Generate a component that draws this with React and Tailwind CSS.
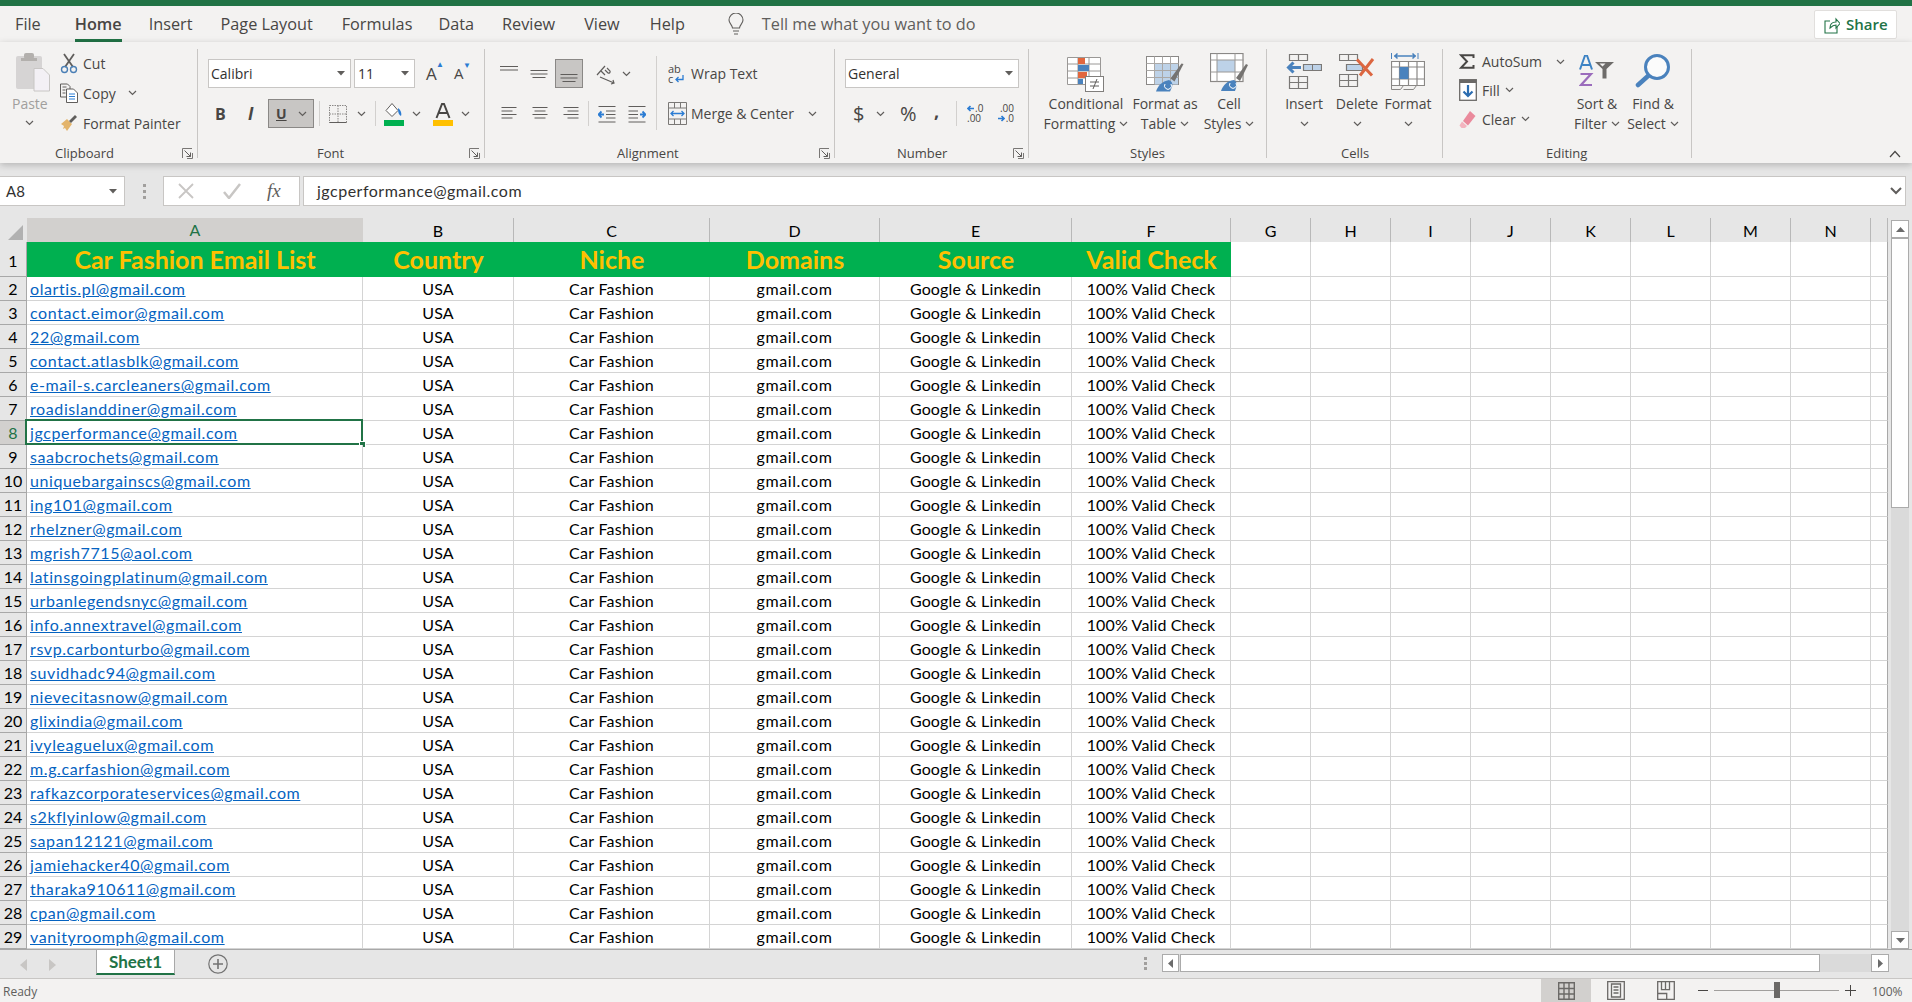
import React from 'react';

const emails = [
  'olartis.pl@gmail.com', 'contact.eimor@gmail.com', '22@gmail.com', 'contact.atlasblk@gmail.com',
  'e-mail-s.carcleaners@gmail.com', 'roadislanddiner@gmail.com', 'jgcperformance@gmail.com', 'saabcrochets@gmail.com',
  'uniquebargainscs@gmail.com', 'ing101@gmail.com', 'rhelzner@gmail.com', 'mgrish7715@aol.com',
  'latinsgoingplatinum@gmail.com', 'urbanlegendsnyc@gmail.com', 'info.annextravel@gmail.com', 'rsvp.carbonturbo@gmail.com',
  'suvidhadc94@gmail.com', 'nievecitasnow@gmail.com', 'glixindia@gmail.com', 'ivyleaguelux@gmail.com',
  'm.g.carfashion@gmail.com', 'rafkazcorporateservices@gmail.com', 's2kflyinlow@gmail.com', 'sapan12121@gmail.com',
  'jamiehacker40@gmail.com', 'tharaka910611@gmail.com', 'cpan@gmail.com', 'vanityroomph@gmail.com',
];

const gridCols = 'grid grid-cols-[27px_336px_151px_196px_170px_192px_159px_80px_80px_80px_80px_80px_80px_80px_80px_17px]';
const extraCols = ['G', 'H', 'I', 'J', 'K', 'L', 'M', 'N', ''];
const rowCells = [
  ['USA', 'tracking-[0.1px]'],
  ['Car Fashion', 'tracking-[0.3px]'],
  ['gmail.com', 'tracking-[0.6px]'],
  ['Google & Linkedin', 'tracking-[0.15px]'],
  ['100% Valid Check', 'tracking-[0.15px]'],
];

const Chev = ({ className = '' }) => (
  <svg width="9" height="6" viewBox="0 0 9 6" className={`inline-block shrink-0 ${className}`}>
    <path d="M1 1l3.500 3.500L8 1" fill="none" stroke="#605e5c" strokeWidth="1.200" />
  </svg>
);

const Caret = () => (
  <svg width="8" height="5" viewBox="0 0 8 5" className="shrink-0"><path d="M0 0h8L4 4.500z" fill="#605e5c" /></svg>
);

const Launcher = () => (
  <svg width="11" height="11" viewBox="0 0 11 11" className="shrink-0">
    <path d="M.5 10V.5H10M10.500 5v5.500H5" fill="none" stroke="#797775" />
    <path d="M2.500 2.500l6 6M8.500 4.500v4h-4" fill="none" stroke="#605e5c" />
  </svg>
);

const Group = ({ width, label, labelLeft, launcher, children }) => (
  <div className={`flex h-[109px] mt-[7px] shrink-0 flex-col border-r border-[#c8c6c4] ${width}`}>
    <div className="flex-1 min-h-0">{children}</div>
    <div className="flex h-[16px] -mb-[3px] items-center text-[13px] leading-none text-[#484644]">
      <span className={labelLeft}>{label}</span>
      {launcher && <span className="ml-auto mr-[4px] flex"><Launcher /></span>}
    </div>
  </div>
);

const BigButton = ({ width, iconTop, icon, lines }) => (
  <div className={`flex shrink-0 flex-col items-center text-[14px] leading-[20px] text-[#484644] ${width}`}>
    <div className={`flex h-[45px] items-start justify-center ${iconTop}`}>{icon}</div>
    {lines.map((l, i) => <div key={i} className="flex items-center gap-[4px] whitespace-nowrap">{l}{i === 1 && <Chev />}</div>)}
    {lines.length === 1 && <div className="flex h-[20px] items-center"><Chev /></div>}
  </div>
);

const AlignLines = ({ widths, y = 0 }) => (
  <svg width="20" height="18" viewBox="0 0 20 18">
    {widths.map((w, i) => <path key={i} d={`M${(20 - w[0]) / 2 + w[1]} ${y + i * 3.5 + .5}h${w[0]}`} stroke="#5f5d5b" strokeWidth="1" />)}
  </svg>
);

const PasteIcon = () => (
  <svg width="36" height="39" viewBox="0 0 36 39">
    <rect x="1" y="3" width="26" height="33" rx="2" fill="#d6d4d4" />
    <rect x="9" y="0" width="10" height="6" rx="2" fill="#b3b0ad" />
    <rect x="6" y="5" width="16" height="3" fill="#b3b0ad" />
    <path d="M19 15.500h9l6.500 6.500v16H19z" fill="#f3f0f5" stroke="#c8c6c4" />
  </svg>
);
const CutIcon = () => (
  <svg width="18" height="21" viewBox="0 0 18 21">
    <path d="M4 1l9 13M14 1L5 14" stroke="#605e5c" strokeWidth="1.800" fill="none" />
    <circle cx="4.500" cy="16.500" r="3" fill="none" stroke="#4a7fb5" strokeWidth="1.400" />
    <circle cx="13.500" cy="16.500" r="3" fill="none" stroke="#4a7fb5" strokeWidth="1.400" />
  </svg>
);
const CopyIcon = () => (
  <svg width="18" height="20" viewBox="0 0 18 20" fill="none">
    <path d="M.5 1h7l2.500 2.500V14H.5z" fill="#f3f2f1" stroke="#605e5c" />
    <path d="M6.500 6h7l4 4v9.500h-11z" fill="#fff" stroke="#605e5c" />
    <path d="M9 11h6M9 13.500h6M9 16h6" stroke="#2b7cd3" />
    <path d="M2.500 4h4M2.500 7h3M2.500 10h3" stroke="#605e5c" />
  </svg>
);
const PainterIcon = () => (
  <svg width="18" height="18" viewBox="0 0 18 18">
    <path d="M1 10l6-5 5 5-5 7-2-3-2 1 1-3z" fill="#e3b46b" />
    <path d="M9 7l6-6 2 2-6 6z" fill="#605e5c" />
  </svg>
);
const BorderIcon = () => (
  <svg width="18" height="18" viewBox="0 0 18 18" fill="none" stroke="#8a8886" strokeDasharray="1.500 1">
    <path d="M.5.500h17v17H.5zM9 .5v17M.5 9h17" />
    <path d="M.5 17.500h17" stroke="#605e5c" strokeDasharray="none" />
  </svg>
);
const FillIcon = () => (
  <svg width="20" height="24" viewBox="0 0 20 24">
    <path d="M8 1.500l6 7-6 6-6-6z" fill="#fff" stroke="#605e5c" />
    <path d="M14 6c3 2 4 6 3 8-2-1-3-3-3-8z" fill="#2b7cd3" />
    <rect x="0" y="18" width="20" height="6" fill="#00b050" />
  </svg>
);
const FontColorIcon = () => (
  <svg width="20" height="24" viewBox="0 0 20 24">
    <path d="M3.500 16L9 2h2l5.500 14M6 11h8" fill="none" stroke="#484644" strokeWidth="2" />
    <rect x="0" y="18" width="20" height="6" fill="#ffc000" />
  </svg>
);
const OrientIcon = () => (
  <svg width="20" height="22" viewBox="0 0 20 22" fill="none" stroke="#605e5c" strokeWidth="1.200">
    <path d="M1 12l8-9M5 8l4 4M11 5l3 3a1.500 1.500 0 0 1-2 2l-3-3M4 14l14 6M15 21l3-1-1-3" />
  </svg>
);
const IndentIcon = ({ flip }) => (
  <svg width="18" height="18" viewBox="0 0 18 18" fill="none" className={flip ? '-scale-x-100' : ''}>
    <path d="M.5 1.500h17M8 6h9.500M8 9.500h9.500M8 13h9.500M.5 17h17" stroke="#605e5c" />
    <path d="M6 9.500H1M3.500 6.500l-3 3 3 3" stroke="#2b7cd3" strokeWidth="1.800" />
  </svg>
);
const WrapIcon = () => (
  <div className="w-[18px] text-[11px] leading-[10px] text-[#484644]">
    <div>ab</div>
    <div className="flex items-center">c
      <svg width="10" height="8" viewBox="0 0 10 8" className="ml-px"><path d="M9 0v4.500H2M4.500 2L2 4.500 4.500 7" fill="none" stroke="#2b7cd3" strokeWidth="1.300" /></svg>
    </div>
  </div>
);
const MergeIcon = () => (
  <svg width="19" height="23" viewBox="0 0 19 23" fill="none">
    <path d="M.5.500h18v22H.5zM.5 6h18M.5 17h18M6.500.5V6M12.500.5V6M6.500 17v5.500M12.500 17v5.500" stroke="#7a7876" />
    <path d="M3 11.500h13M5.500 9l-2.500 2.500L5.500 14M13.500 9l2.500 2.500-2.500 2.500" stroke="#2b7cd3" strokeWidth="1.300" />
  </svg>
);
const DecArrow = ({ right }) => (
  <svg width="7" height="7" viewBox="0 0 7 7" className="mr-px">
    {right
      ? <path d="M0 3.500h5.500M3.500 1l2.500 2.500L3.500 6" fill="none" stroke="#2b7cd3" strokeWidth="1.600" />
      : <path d="M7 3.500H1.500M3.500 1L1 3.500 3.500 6" fill="none" stroke="#2b7cd3" strokeWidth="1.600" />}
  </svg>
);
const DecimalIcon = ({ dec }) => (
  <div className="w-[17px] text-[10px] leading-[9px] text-[#484644]">
    {dec
      ? <><div className="flex justify-end">.00</div><div className="mt-px flex items-center justify-end"><DecArrow right />.0</div></>
      : <><div className="flex items-center"><DecArrow />.0</div><div className="mt-px">.00</div></>}
  </div>
);
const CondIcon = () => (
  <svg width="38" height="35" viewBox="0 0 38 35">
    <path d="M.5.500h33v27H.5zM11 .5v27M22 .5v27M.5 7h33M.5 14h33M.5 21h33" fill="#fff" stroke="#9a9896" />
    <rect x="11" y="1" width="7" height="6" fill="#e2673e" />
    <rect x="11" y="8" width="11" height="6" fill="#4a82bd" />
    <rect x="11" y="15" width="9" height="6" fill="#e2673e" />
    <rect x="11" y="22" width="5" height="5" fill="#4a82bd" />
    <rect x="18.500" y="19.500" width="18" height="15" fill="#fff" stroke="#807e7c" />
    <path d="M23 25h9M23 29h9M30 22l-4 10" stroke="#605e5c" fill="none" />
  </svg>
);
const TableStyleIcon = () => (
  <svg width="38" height="36" viewBox="0 0 38 36">
    <rect x=".5" y=".5" width="32" height="28" fill="#fff" stroke="#8a8886" />
    <rect x="9" y="7.500" width="23" height="21" fill="#bdd2e8" />
    <path d="M8.500 .5v28M16.500 .5v28M24.500 .5v28M.5 7.500h32M.5 14.500h32M.5 21.500h32" stroke="#aaa8a6" fill="none" />
    <path d="M37.500 8l-2-.5-11 15 4 3z" fill="#757371" />
    <path d="M10 35.500c2-6 6-10 13-11.500 3 1.500 4 3.500 3 7l-2 4.500z" fill="#4a82bd" />
    <path d="M19 28a3.500 3.500 0 1 0 6 0" fill="none" stroke="#fff" />
  </svg>
);
const CellStyleIcon = () => (
  <svg width="38" height="38" viewBox="0 0 38 38">
    <rect x=".5" y=".5" width="32.500" height="28" fill="#fff" stroke="#8a8886" strokeWidth="1.200" />
    <rect x="7" y="7" width="18" height="12" fill="#bdd2e8" />
    <path d="M7 .5v28M25 .5v28M.5 7h33M.5 19h33" stroke="#9a9896" fill="none" />
    <path d="M38 12l-2-1-10 14 4 3z" fill="#757371" />
    <path d="M11 38c2-6 6-10 13-11 3 1.500 3 5 2 8l-1 3z" fill="#4a82bd" />
    <path d="M20 30a3.500 3.500 0 1 0 6 0" fill="none" stroke="#fff" />
  </svg>
);
const InsertIcon = () => (
  <svg width="36" height="35" viewBox="0 0 36 35" fill="none">
    <path d="M3.500.5h18v6h-18zM12.500 .5v6M3.500 22.500h18v12h-18zM12.500 22.500v12M3.500 28.500h18" stroke="#7a7876" strokeWidth="1.200" />
    <path d="M17.500 10.500h18v6h-18z" fill="#bdd2e8" stroke="#7a7876" strokeWidth="1.200" />
    <path d="M26.500 10.500v6" stroke="#7a7876" />
    <path d="M15 13.500H3M7.500 8.500l-5 5 5 5" stroke="#4a82bd" strokeWidth="3" />
  </svg>
);
const DeleteIcon = () => (
  <svg width="36" height="33" viewBox="0 0 36 33" fill="none">
    <path d="M.5.500h18v6H.5zM9.500 .5v6M.5 20.500h18v12H.5zM9.500 20.500v12M.5 26.500h18" stroke="#7a7876" strokeWidth="1.200" />
    <path d="M7.500 10.500h16v6h-16z" fill="#bdd2e8" stroke="#7a7876" strokeWidth="1.200" />
    <path d="M18 5.500l15 16M34 5L21 21.500" stroke="#dc6640" strokeWidth="3" />
  </svg>
);
const FormatIcon = () => (
  <svg width="34" height="37" viewBox="0 0 34 37" fill="none">
    <path d="M.5 0v6M27 0v6" stroke="#4a82bd" />
    <path d="M3 3h22M6.500 .5L4 3l2.500 2.500M21.500 .5L24 3l-2.500 2.500" stroke="#4a82bd" strokeWidth="1.500" />
    <path d="M.5 8.500h33v24H.5zM.5 14h33M.5 26h33M8.500 8.500v24M17.500 8.500v24M26 8.500v24" fill="#fff" stroke="#8a8886" strokeWidth="1.200" />
    <rect x="8.500" y="14" width="9" height="12" fill="#4a82bd" />
    <path d="M.5 32.500v4h9l3-4M12.500 36.500h10l3-4" stroke="#8a8886" />
  </svg>
);
const SigmaIcon = () => (
  <svg width="16" height="15" viewBox="0 0 16 15" fill="none">
    <path d="M14.500 4V1.200H2l6 6.300-6 6.300h12.500V11" stroke="#484644" strokeWidth="2" />
  </svg>
);
const FillDownIcon = () => (
  <svg width="18" height="22" viewBox="0 0 18 22">
    <rect x=".7" y=".7" width="16.600" height="20.600" fill="#fff" stroke="#6b6967" strokeWidth="1.300" />
    <rect x="1" y="1" width="16" height="3" fill="#6b6967" />
    <path d="M9 6v11M4.500 12.500L9 17l4.500-4.500" fill="none" stroke="#2b6cb0" strokeWidth="2.200" />
  </svg>
);
const EraserIcon = () => (
  <svg width="17" height="17" viewBox="0 0 17 17">
    <path d="M11 0l5.500 5-7.500 9.500-5-4.500z" fill="#ea8a9c" />
    <path d="M3 10.500l5 4.500-2 2H2.500L.5 14.500z" fill="#f3b4bf" />
  </svg>
);
const SortIcon = () => (
  <svg width="36" height="32" viewBox="0 0 36 32">
    <path d="M1 14.500L6 .5h2l5 14M3.500 10h7.500" fill="none" stroke="#3d83c4" strokeWidth="2" />
    <path d="M1.500 19h10.500L2 30h11" fill="none" stroke="#9b6cbc" strokeWidth="2.200" />
    <path d="M16 7h19l-7.500 7v9.500h-4V14z" fill="#6e6c6a" />
    <path d="M20.500 8.500h6l-3 3z" fill="#f3f2f1" />
  </svg>
);
const FindIcon = () => (
  <svg width="36" height="34" viewBox="0 0 36 34" fill="none">
    <circle cx="22" cy="13" r="11.500" stroke="#4a82bd" strokeWidth="3" fill="#fbfbfb" />
    <path d="M13 22L3 31" stroke="#4a82bd" strokeWidth="4.500" strokeLinecap="round" />
  </svg>
);
const BulbIcon = () => (
  <svg width="16" height="23" viewBox="0 0 16 23" fill="none" stroke="#605e5c" strokeWidth="1.100">
    <path d="M4.500 15c0-3-3.500-4.500-3.500-8a7 7 0 0 1 14 0c0 3.500-3.500 5-3.500 8z" />
    <path d="M5 18h6M6 21h4" />
  </svg>
);
const ShareIcon = () => (
  <svg width="16" height="19" viewBox="0 0 16 19" fill="none" stroke="#217346" strokeWidth="1.100">
    <path d="M6 6H1v12h12v-6" />
    <path d="M6 13c0-4 2-6 6-6V4l4 4.500-4 4.500v-3c-3 0-4 1-6 3z" />
  </svg>
);

const SmallRow = ({ icon, children }) => (
  <div className="flex h-[30px] items-center whitespace-nowrap">
    <span className="flex w-[23px] shrink-0">{icon}</span>
    {children}
  </div>
);

const Ribbon = () => (
  <div className="relative z-10 flex h-[121px] items-start bg-[#f3f2f1] shadow-[0_2px_7px_rgba(0,0,0,0.22)] font-['Open_Sans',sans-serif] text-[14px] text-[#484644]">
    <Group width="w-[198px]" label="Clipboard" labelLeft="ml-[55px]" launcher>
      <div className="flex pl-[12px]">
        <div className="flex w-[48px] shrink-0 flex-col pt-[4px] text-[#a19f9d]">
          <div className="flex h-[41px] pl-[3px]"><PasteIcon /></div>
          <div className="leading-[20px]">Paste</div>
          <div className="flex h-[18px] items-center pl-[13px]"><Chev /></div>
        </div>
        <div className="-mt-px flex flex-col">
          <SmallRow icon={<CutIcon />}>Cut</SmallRow>
          <SmallRow icon={<CopyIcon />}>Copy<Chev className="ml-[12px]" /></SmallRow>
          <SmallRow icon={<PainterIcon />}>Format Painter</SmallRow>
        </div>
      </div>
    </Group>

    <Group width="w-[287px]" label="Font" labelLeft="ml-[119px]" launcher>
      <div className="pl-[10px] pt-[10px]">
        <div className="flex h-[29px] items-center">
          <div className="flex h-full w-[143px] items-center justify-between border border-[#c8c6c4] bg-white pl-[2px] pr-[5px] text-[#323130]">Calibri<Caret /></div>
          <div className="ml-[3px] flex h-full w-[61px] items-center justify-between border border-[#c8c6c4] bg-white pl-[3px] pr-[5px] text-[#323130]">11<Caret /></div>
          <span className="relative ml-[11px] w-[28px] text-[17px]">A<span className="absolute left-[10px] top-[-3px] text-[8px] text-[#2b7cd3]">▲</span></span>
          <span className="relative w-[20px] text-[15px]">A<span className="absolute left-[9px] top-[-3px] text-[8px] text-[#2b7cd3]">▼</span></span>
        </div>
        <div className="mt-[11px] flex h-[29px] items-center">
          <span className="ml-[7px] w-[33px] text-[16px] font-bold">B</span>
          <span className="w-[20px] text-[17px] font-bold italic">I</span>
          <div className="flex h-full w-[46px] items-center border border-[#8a8886] bg-[#c8c6c4] pl-[7px]">
            <span className="font-bold underline">U</span><Chev className="ml-[11px]" />
          </div>
          <span className="ml-[5px] h-[25px] w-px bg-[#d2d0ce]" />
          <span className="ml-[9px] flex"><BorderIcon /></span>
          <Chev className="ml-[10px]" />
          <span className="ml-[9px] h-[25px] w-px bg-[#d2d0ce]" />
          <span className="ml-[8px] flex"><FillIcon /></span>
          <Chev className="ml-[8px]" />
          <span className="ml-[12px] flex"><FontColorIcon /></span>
          <Chev className="ml-[8px]" />
        </div>
      </div>
    </Group>

    <Group width="w-[350px]" label="Alignment" labelLeft="ml-[132px]" launcher>
      <div className="flex pl-[14px] pt-[10px]">
        <div className="w-[157px] shrink-0">
          <div className="flex h-[29px] items-center">
            <span className="flex w-[30px]"><AlignLines widths={[[18, 0], [18, 0]]} y={1} /></span>
            <span className="flex w-[26px]"><AlignLines widths={[[17, 0], [17, 0], [13, 0]]} y={5} /></span>
            <span className="flex h-full w-[28px] items-center justify-center border border-[#8a8886] bg-[#c8c6c4]"><AlignLines widths={[[17, 0], [17, 0], [13, 0]]} y={9} /></span>
            <span className="ml-[13px] flex"><OrientIcon /></span>
            <Chev className="ml-[6px]" />
          </div>
          <div className="mt-[11px] flex h-[29px] items-center">
            <span className="flex w-[31px] pl-[2px]"><AlignLines widths={[[15, -2], [11, -4], [15, -2], [11, -4]]} y={2} /></span>
            <span className="flex w-[31px]"><AlignLines widths={[[15, 0], [11, 0], [15, 0], [11, 0]]} y={2} /></span>
            <span className="flex w-[27px]"><AlignLines widths={[[15, 0], [11, 2], [15, 0], [11, 2]]} y={2} /></span>
            <span className="h-[25px] w-px bg-[#d2d0ce]" />
            <span className="ml-[9px] flex"><IndentIcon /></span>
            <span className="ml-[12px] flex"><IndentIcon flip /></span>
          </div>
        </div>
        <div className="-mt-[3px] h-[74px] w-px shrink-0 bg-[#d2d0ce]" />
        <div className="pl-[11px] whitespace-nowrap">
          <div className="flex h-[29px] items-center"><span className="flex w-[23px]"><WrapIcon /></span>Wrap Text</div>
          <div className="mt-[11px] flex h-[29px] items-center"><span className="flex w-[23px]"><MergeIcon /></span>Merge &amp; Center<Chev className="ml-[14px]" /></div>
        </div>
      </div>
    </Group>

    <Group width="w-[194px]" label="Number" labelLeft="ml-[62px]" launcher>
      <div className="pl-[10px] pt-[10px]">
        <div className="flex h-[29px] w-[174px] items-center justify-between border border-[#c8c6c4] bg-white pl-[2px] pr-[5px] text-[#323130]">General<Caret /></div>
        <div className="mt-[11px] flex h-[29px] items-center">
          <span className="ml-[8px] w-[22px] text-[20px]">$</span>
          <Chev className="ml-px" />
          <span className="ml-[15px] w-[30px] text-[20px] leading-none">%</span>
          <span className="ml-[4px] w-[22px] -translate-y-[3px] text-[18px] font-bold leading-none">,</span>
          <span className="h-[25px] w-px bg-[#d2d0ce]" />
          <span className="ml-[10px] flex"><DecimalIcon /></span>
          <span className="ml-[13px] flex"><DecimalIcon dec /></span>
        </div>
      </div>
    </Group>

    <Group width="w-[238px]" label="Styles" labelLeft="ml-[101px]">
      <div className="flex pl-[17px]">
        <BigButton width="w-[80px]" iconTop="pt-[8px]" icon={<CondIcon />} lines={['Conditional', 'Formatting']} />
        <BigButton width="w-[78px]" iconTop="pt-[7px]" icon={<TableStyleIcon />} lines={['Format as', 'Table']} />
        <BigButton width="w-[50px]" iconTop="pt-[4px]" icon={<CellStyleIcon />} lines={['Cell', 'Styles']} />
      </div>
    </Group>

    <Group width="w-[176px]" label="Cells" labelLeft="ml-[74px]">
      <div className="flex pl-[11px]">
        <BigButton width="w-[52px]" iconTop="pt-[5px]" icon={<InsertIcon />} lines={['Insert']} />
        <BigButton width="w-[54px]" iconTop="pt-[5px]" icon={<DeleteIcon />} lines={['Delete']} />
        <BigButton width="w-[48px]" iconTop="pt-[4px]" icon={<FormatIcon />} lines={['Format']} />
      </div>
    </Group>

    <Group width="w-[249px]" label="Editing" labelLeft="ml-[103px]">
      <div className="flex pl-[16px]">
        <div className="-mt-px w-[107px] shrink-0">
          <div className="flex h-[27px] items-center whitespace-nowrap">
            <span className="flex w-[23px]"><SigmaIcon /></span>AutoSum<Chev className="ml-[14px]" />
          </div>
          <div className="mt-px flex h-[28px] items-center"><span className="flex w-[23px]"><FillDownIcon /></span>Fill<Chev className="ml-[5px]" /></div>
          <div className="mt-px flex h-[28px] items-center"><span className="flex w-[23px]"><EraserIcon /></span>Clear<Chev className="ml-[5px]" /></div>
        </div>
        <BigButton width="w-[62px]" iconTop="pt-[6px]" icon={<SortIcon />} lines={['Sort &', 'Filter']} />
        <BigButton width="w-[50px]" iconTop="pt-[5px]" icon={<FindIcon />} lines={['Find &', 'Select']} />
      </div>
    </Group>

    <div className="ml-auto mr-[11px] mt-[108px]">
      <svg width="12" height="8" viewBox="0 0 12 8"><path d="M1 7l5-5.500L11 7" fill="none" stroke="#484644" strokeWidth="1.200" /></svg>
    </div>
  </div>
);

const Tabs = () => (
  <div className="flex h-[36px] items-center bg-[#f3f2f1] font-['Open_Sans',sans-serif] text-[16.25px] text-[#484644] whitespace-nowrap">
    <span className="ml-[15px]">File</span>
    <span className="relative ml-[34px] font-semibold">
      Home
      <span className="absolute bottom-[-7px] left-0 right-0 h-[4px] bg-[#217346]" />
    </span>
    <span className="ml-[27px]">Insert</span>
    <span className="ml-[28px]">Page Layout</span>
    <span className="ml-[29px]">Formulas</span>
    <span className="ml-[26px]">Data</span>
    <span className="ml-[28px]">Review</span>
    <span className="ml-[29px]">View</span>
    <span className="ml-[30px]">Help</span>
    <span className="ml-[43px] flex"><BulbIcon /></span>
    <span className="ml-[18px] text-[#605e5c]">Tell me what you want to do</span>
    <div className="ml-auto mr-[15px] flex h-[29px] w-[83px] items-center rounded-[2px] border border-[#e1dfdd] bg-white pl-[9px] font-semibold text-[#217346]">
      <ShareIcon /><span className="ml-[6px] text-[15px]">Share</span>
    </div>
  </div>
);

const FormulaBar = () => (
  <div className="flex h-[55px] items-start bg-[#e6e6e6] pt-[13px] font-['Lato',sans-serif] text-[15px] text-[#323130]">
    <div className="flex h-[30px] w-[125px] items-center justify-between border-y border-r border-[#c8c6c4] bg-white pl-[6px] pr-[7px]">A8<Caret /></div>
    <div className="flex h-[30px] w-[38px] flex-col items-center justify-center gap-[3px]">
      <span className="h-[3px] w-[3px] bg-[#a19f9d]" /><span className="h-[3px] w-[3px] bg-[#a19f9d]" /><span className="h-[3px] w-[3px] bg-[#a19f9d]" />
    </div>
    <div className="flex h-[30px] w-[137px] items-center border border-[#c8c6c4] bg-white pl-[14px]">
      <svg width="16" height="16" viewBox="0 0 16 16"><path d="M1 1l14 14M15 1L1 15" stroke="#c8c6c4" strokeWidth="1.800" /></svg>
      <svg width="18" height="16" viewBox="0 0 18 16" className="ml-[29px]"><path d="M1 9l5 6L17 1" fill="none" stroke="#c8c6c4" strokeWidth="2.500" /></svg>
      <span className="ml-[26px] font-['Liberation_Serif',serif] text-[19px] italic text-[#605e5c]">fx</span>
    </div>
    <div className="ml-[3px] flex h-[30px] w-[1603px] items-center border border-[#c8c6c4] bg-white pl-[13px] text-[16px] tracking-[0.5px]">
      jgcperformance@gmail.com
      <svg width="12" height="8" viewBox="0 0 12 8" className="ml-auto mr-[3px]"><path d="M1 1l5 5 5-5" fill="none" stroke="#605e5c" strokeWidth="2" /></svg>
    </div>
  </div>
);

const ColHeaders = () => (
  <div className={`${gridCols} h-[24px] bg-[#e6e6e6] text-[16px] text-black`}>
    <div className="flex items-end justify-end border-b border-[#9e9e9e] pb-[2px] pr-[3px]">
      <svg width="17" height="17" viewBox="0 0 17 17"><path d="M16 1v15H1z" fill="#b1b1b1" /></svg>
    </div>
    <div className="flex items-center justify-center border-b-2 border-[#217346] bg-[#d2d0ce] text-[#217346]">A</div>
    {['B', 'C', 'D', 'E', 'F', ...extraCols].map((c, i) => (
      <div key={i} className="flex items-center justify-center border-b border-r border-b-[#9e9e9e] border-r-[#b8b8b8]">{c}</div>
    ))}
  </div>
);

const blankCells = (key) => [...Array(9)].map((_, i) => (
  <div key={`${key}-${i}`} className={`border-b border-r border-[#d4d4d4] bg-white ${i === 8 ? 'border-r-[#a8a8a8]' : ''}`} />
));

const HeaderRow = () => (
  <div className={`${gridCols} grid-rows-[35px] h-[35px] text-[25px] font-bold text-[#ffc000]`}>
    <div className="flex items-end justify-center border-b border-r border-[#a8a8a8] bg-[#e6e6e6] pb-[3px] text-[16px] font-normal text-black">1</div>
    {['Car Fashion Email List', 'Country', 'Niche', 'Domains', 'Source', 'Valid Check'].map((t) => (
      <div key={t} className="flex items-center justify-center bg-[#00b050] whitespace-nowrap">{t}</div>
    ))}
    {blankCells('h')}
  </div>
);

const DataRow = ({ email, n }) => {
  const selected = n === 8;
  return (
    <div className={`${gridCols} grid-rows-[24px] h-[24px] text-[16px] leading-[24px] text-black`}>
      <div className={`flex items-center justify-center border-b border-r ${selected ? 'border-r-[#217346] border-b-[#a8a8a8] bg-[#d2d0ce] text-[#217346]' : 'border-[#a8a8a8] bg-[#e6e6e6]'}`}>{n}</div>
      <div className="relative border-b border-r border-[#d4d4d4] bg-white pl-[3px] tracking-[0.6px] text-[#0563c1] underline whitespace-nowrap">
        {email}
        {selected && (
          <>
            <span className="absolute -left-[2px] -right-px -top-[2px] -bottom-px border-2 border-[#217346]" />
            <span className="absolute -bottom-[4px] -right-[4px] h-[7px] w-[7px] border border-white bg-[#217346]" />
            <span className="absolute -bottom-[6px] left-[1px] h-[4px] w-[13px] border border-[#8cc5a2] bg-white" />
          </>
        )}
      </div>
      {rowCells.map(([t, track]) => (
        <div key={t} className={`border-b border-r border-[#d4d4d4] bg-white text-center whitespace-nowrap ${track}`}>{t}</div>
      ))}
      {blankCells(n)}
    </div>
  );
};

const VScrollBar = () => (
  <div className="flex h-[731px] w-[24px] flex-col bg-[#e6e6e6] pl-[3px] pt-[2px]">
    <div className="flex h-[18px] w-[18px] items-center justify-center border border-[#ababab] bg-white">
      <svg width="9" height="5" viewBox="0 0 9 5"><path d="M0 5h9L4.500 0z" fill="#6b6b6b" /></svg>
    </div>
    <div className="flex w-[18px] flex-1 flex-col bg-[#dadada]">
      <div className="h-[270px] border border-[#ababab] bg-white" />
    </div>
    <div className="flex h-[18px] w-[18px] items-center justify-center border border-[#ababab] bg-white">
      <svg width="9" height="5" viewBox="0 0 9 5"><path d="M0 0h9L4.500 5z" fill="#6b6b6b" /></svg>
    </div>
  </div>
);

const SheetTabs = () => (
  <div className="flex h-[29px] items-start border-t border-[#a8a8a8] bg-[#e6e6e6] font-['Lato',sans-serif]">
    <svg width="7" height="12" viewBox="0 0 7 12" className="ml-[20px] mt-[9px]"><path d="M7 0v12L0 6z" fill="#c8c6c4" /></svg>
    <svg width="7" height="12" viewBox="0 0 7 12" className="ml-[22px] mt-[9px]"><path d="M0 0v12l7-6z" fill="#c8c6c4" /></svg>
    <div className="ml-[40px] flex h-[25px] w-[79px] items-center justify-center border-x border-b-2 border-x-[#a8a8a8] border-b-[#217346] bg-white text-[17px] font-bold text-[#217346]">Sheet1</div>
    <svg width="20" height="20" viewBox="0 0 20 20" className="ml-[33px] mt-[4px]" fill="none" stroke="#737373" strokeWidth="1.200">
      <circle cx="10" cy="10" r="9.200" /><path d="M10 5v10M5 10h10" strokeWidth="1.600" />
    </svg>
    <div className="ml-[916px] mt-[7px] flex flex-col gap-[2px]">
      <span className="h-[3px] w-[3px] bg-[#a19f9d]" /><span className="h-[3px] w-[3px] bg-[#a19f9d]" /><span className="h-[3px] w-[3px] bg-[#a19f9d]" />
    </div>
    <div className="ml-[15px] mt-[4px] flex h-[18px] items-stretch">
      <div className="flex w-[17px] items-center justify-center border border-[#ababab] bg-white">
        <svg width="5" height="9" viewBox="0 0 5 9"><path d="M5 0v9L0 4.500z" fill="#6b6b6b" /></svg>
      </div>
      <div className="flex w-[692px] bg-[#dadada]">
        <div className="ml-px w-[640px] border border-[#ababab] bg-white" />
      </div>
      <div className="flex w-[18px] items-center justify-center border border-[#ababab] bg-white">
        <svg width="5" height="9" viewBox="0 0 5 9"><path d="M0 0v9l5-4.500z" fill="#6b6b6b" /></svg>
      </div>
    </div>
  </div>
);

const StatusBar = () => (
  <div className="flex h-[24px] items-center border-t border-[#c8c6c4] bg-[#f3f2f1] font-['Open_Sans',sans-serif] text-[12px] text-[#605e5c]">
    <span className="ml-[3px] pt-[3px]">Ready</span>
    <div className="ml-auto flex h-full w-[50px] items-center justify-center bg-[#d2d0ce]">
      <svg width="17" height="18" viewBox="0 0 17 18" fill="none" stroke="#6b6967" strokeWidth="1.400"><path d="M.7.700h15.600v16.600H.7zM6 .7v16.600M11 .7v16.600M.7 6.500h15.600M.7 12h15.600" /></svg>
    </div>
    <div className="flex w-[50px] justify-center">
      <svg width="18" height="19" viewBox="0 0 18 19" fill="none" stroke="#6b6967" strokeWidth="1.300"><path d="M.7.700h16.600v17.600H.7zM4.500 3h9v13h-9zM6.500 6h5M6.500 9h5M6.500 12h5" /></svg>
    </div>
    <div className="flex w-[50px] justify-center">
      <svg width="18" height="19" viewBox="0 0 18 19" fill="none" stroke="#6b6967" strokeWidth="1.300"><path d="M.7.700h16.600v17.600H.7zM4.500.7v8h4V.7M8.500 8.700h4V.7M.7 12.500h9v5.800" /></svg>
    </div>
    <span className="ml-[7px] h-px w-[10px] bg-[#484644]" />
    <div className="relative ml-[6px] h-px w-[125px] bg-[#a19f9d]">
      <span className="absolute left-[60px] top-[-8px] h-[16px] w-[6px] bg-[#6b6967]" />
    </div>
    <svg width="11" height="11" viewBox="0 0 11 11" className="ml-[6px]"><path d="M5.500 0v11M0 5.500h11" stroke="#484644" /></svg>
    <span className="ml-[16px] mr-[9px] w-[31px] pt-[2px] whitespace-nowrap">100%</span>
  </div>
);

export default function App() {
  return (
    <div className="flex h-[1002px] w-[1912px] flex-col overflow-hidden bg-white font-['Lato',sans-serif]">
      <div className="h-[6px] bg-[#217346]" />
      <Tabs />
      <Ribbon />
      <FormulaBar />
      <div className="flex h-[731px]">
        <div className="w-[1888px] shrink-0">
          <ColHeaders />
          <HeaderRow />
          {emails.map((e, i) => <DataRow key={e} email={e} n={i + 2} />)}
        </div>
        <VScrollBar />
      </div>
      <SheetTabs />
      <StatusBar />
    </div>
  );
}
